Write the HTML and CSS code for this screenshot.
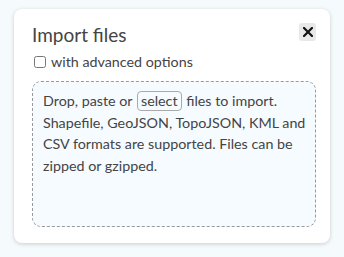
FILE: index.html
```html
<!DOCTYPE html>
<html>
<head>
<meta charset="utf-8">
<link rel="stylesheet" href="styles.css">
</head>
<body>
<div class="card">
  <div class="header">
    <h1 class="title">Import files</h1>
    <button class="close" aria-label="Close">
      <svg width="10" height="10" viewBox="0 0 10 10"><path d="M1 1L9 9M9 1L1 9" stroke="#111" stroke-width="2.2" stroke-linecap="square"/></svg>
    </button>
  </div>
  <label class="option"><input type="checkbox" class="check"> with advanced options</label>
  <div class="drop">
    <p class="info">Drop, paste or <span class="select">select</span> files to import. Shapefile, GeoJSON, TopoJSON, KML and CSV formats are supported. Files can be zipped or gzipped.</p>
  </div>
</div>
</body>
</html>
```
FILE: styles.css
```css
html, body { margin: 0; padding: 0; }
body {
  background: #f5fafd;
  font-family: Lato, "Noto Sans", sans-serif;
  color: #444;
  width: 344px;
  height: 257px;
  overflow: hidden;
}
.card {
  box-sizing: border-box;
  margin: 9px 0 0 14px;
  width: 316px;
  height: 234px;
  background: #fff;
  border-radius: 8px;
  box-shadow: 0 1px 4px rgba(0,0,0,0.18);
  padding: 14px 14px 0 18px;
}
.header {
  display: flex;
  justify-content: space-between;
  align-items: flex-start;
}
.title {
  margin: 0;
  font-size: 19px;
  font-weight: 400;
  line-height: 24px;
  color: #444;
}
.close {
  margin-top: 0;
  width: 17px;
  height: 18px;
  padding: 0;
  border: none;
  border-radius: 3px;
  background: #e8e8e8;
  display: flex;
  align-items: center;
  justify-content: center;
}
.option {
  display: flex;
  align-items: center;
  margin-top: 6px;
  font-size: 14.3px;
  line-height: 18px;
  color: #444;
}
.check {
  margin: 0 5px 0 2px;
  width: 12px;
  height: 12px;
}
.drop {
  box-sizing: border-box;
  margin-top: 10px;
  width: 284px;
  height: 146px;
  border: 1px dashed #999;
  border-radius: 9px;
  background: #f5fbff;
  padding: 8px 2px 8px 10px;
}
.info {
  margin: 0;
  font-size: 14.3px;
  line-height: 21.7px;
  color: #444;
}
.select {
  display: inline-block;
  border: 1px solid #aaa;
  border-radius: 4px;
  padding: 0 3px;
  margin: 0 1px;
  line-height: 18px;
}
```
